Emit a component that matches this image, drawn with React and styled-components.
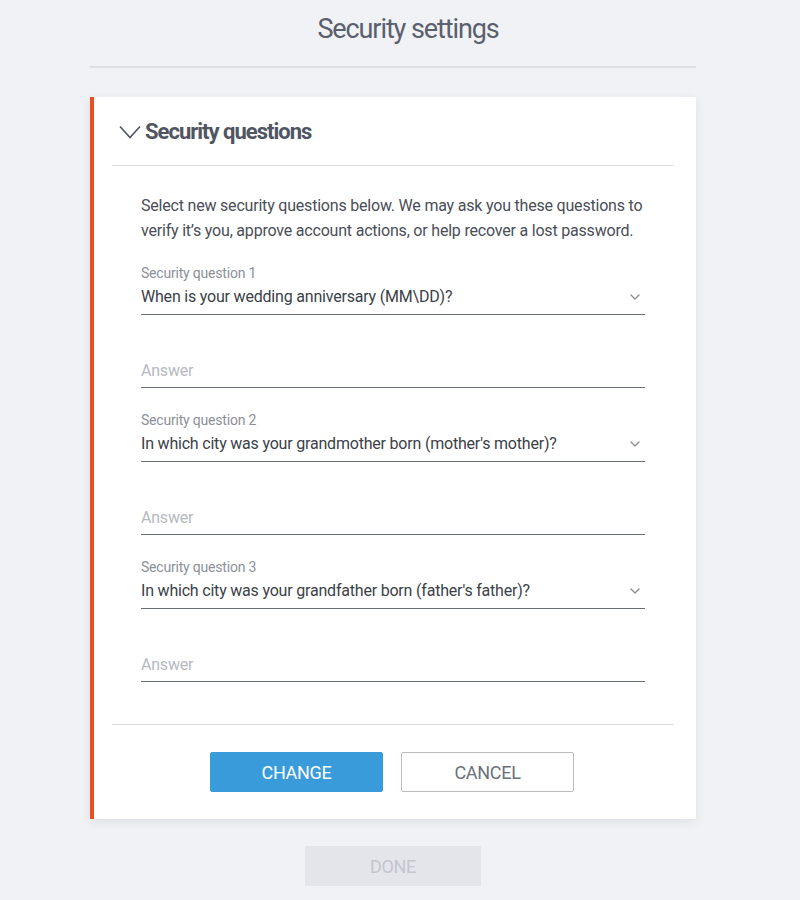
import React from 'react';
import styled, { createGlobalStyle } from 'styled-components';

const GlobalStyle = createGlobalStyle`
  body {
    margin: 0;
    background: #f1f2f6;
    font-family: Roboto, 'Liberation Sans', sans-serif;
  }
`;

const questions = [
  'When is your wedding anniversary (MM\\DD)?',
  "In which city was your grandmother born (mother's mother)?",
  "In which city was your grandfather born (father's father)?",
];

const Chevron = ({ size = 10, stroke = '#8a8e96', width = 1.4 }) => (
  <svg width={size} height={size * 0.6} viewBox='0 0 10 6'>
    <polyline
      points='1,1 5,5 9,1'
      fill='none'
      stroke={stroke}
      strokeWidth={width}
      strokeLinecap='round'
      strokeLinejoin='round'
    />
  </svg>
);

const App = () => {
  return (
    <>
      <GlobalStyle />
      <Page>
        <Title>Security settings</Title>
        <Rule />
        <Card>
          <Header>
            <svg width='22' height='14' viewBox='0 0 22 14'>
              <polyline
                points='1,1.5 11,12.5 21,1.5'
                fill='none'
                stroke='#4f5563'
                strokeWidth='1.6'
              />
            </svg>
            <HeaderTitle>Security questions</HeaderTitle>
          </Header>
          <Body>
            <Intro>
              Select new security questions below. We may ask you these questions to
              verify it’s you, approve account actions, or help recover a lost password.
            </Intro>
            {questions.map((q, i) => (
              <Block key={i}>
                <Field>
                  <Label>Security question {i + 1}</Label>
                  <SelectRow>
                    <span>{q}</span>
                    <Chevron />
                  </SelectRow>
                </Field>
                <Field>
                  <AnswerRow>Answer</AnswerRow>
                </Field>
              </Block>
            ))}
          </Body>
          <Footer>
            <Button $primary>CHANGE</Button>
            <Button>CANCEL</Button>
          </Footer>
        </Card>
        <DoneRow>
          <DoneButton>DONE</DoneButton>
        </DoneRow>
      </Page>
    </>
  );
};

export default App;

const Page = styled.div`
  width: 606px;
  margin-left: 90px;
  display: flex;
  flex-direction: column;
`;

const Title = styled.h1`
  margin: 0;
  height: 66px;
  padding-left: 30px;
  display: flex;
  align-items: center;
  justify-content: center;
  padding-bottom: 8px;
  box-sizing: border-box;
  font-size: 27px;
  font-weight: 400;
  letter-spacing: -1.1px;
  color: #5a606d;
`;

const Rule = styled.div`
  height: 2px;
  background: #dcdee4;
  margin-bottom: 29px;
`;

const Card = styled.div`
  background: #fff;
  border-left: 4px solid #e8511f;
  box-shadow: 0 3px 10px rgba(40, 45, 60, 0.09);
`;

const Header = styled.div`
  height: 67px;
  margin: 0 22px 0 18px;
  padding: 1px 0 0 7px;
  display: flex;
  align-items: center;
  gap: 4px;
  border-bottom: 1px solid #dadce1;
`;

const HeaderTitle = styled.div`
  font-size: 22px;
  font-weight: 700;
  color: #4f5563;
  letter-spacing: -1px;
`;

const Body = styled.div`
  margin: 0 22px 0 18px;
  padding: 27px 29px 42px;
  border-bottom: 1px solid #dadce1;
`;

const Intro = styled.p`
  margin: 0 0 21px;
  font-size: 16px;
  line-height: 25px;
  color: #4a4e57;
  letter-spacing: -0.2px;
`;

const Block = styled.div`
  display: flex;
  flex-direction: column;
  gap: 45px;
  margin-bottom: 23px;

  &:last-child {
    margin-bottom: 0;
  }
`;

const Field = styled.div`
  display: flex;
  flex-direction: column;
  border-bottom: 1.5px solid #6a6e76;
`;

const Label = styled.div`
  font-size: 14px;
  line-height: 18px;
  color: #8c9099;
  letter-spacing: -0.2px;
`;

const SelectRow = styled.div`
  display: flex;
  align-items: center;
  justify-content: space-between;
  padding: 4px 5px 6px 0;
  font-size: 16px;
  line-height: 22px;
  color: #3b3f48;
  letter-spacing: -0.2px;
`;

const AnswerRow = styled.div`
  padding: 0 0 5px;
  font-size: 16px;
  line-height: 22px;
  color: #b6b9c0;
  letter-spacing: -0.2px;
`;

const Footer = styled.div`
  display: flex;
  justify-content: center;
  gap: 18px;
  padding: 27px 6px 27px 0;
`;

const Button = styled.button`
  width: 173px;
  height: 40px;
  box-sizing: border-box;
  border-radius: 2px;
  font-family: Roboto, 'Liberation Sans', sans-serif;
  font-size: 18px;
  letter-spacing: -0.3px;
  cursor: pointer;
  border: 1px solid ${(p) => (p.$primary ? '#3a9bdb' : '#b9bcc3')};
  background: ${(p) => (p.$primary ? '#3a9bdb' : '#fff')};
  color: ${(p) => (p.$primary ? '#fff' : '#6b7079')};
`;

const DoneRow = styled.div`
  display: flex;
  justify-content: center;
  padding-top: 27px;
`;

const DoneButton = styled.button`
  width: 176px;
  height: 40px;
  border: none;
  background: #e3e5ea;
  color: #c3c6cd;
  font-family: Roboto, 'Liberation Sans', sans-serif;
  font-size: 18px;
  letter-spacing: -0.3px;
`;
